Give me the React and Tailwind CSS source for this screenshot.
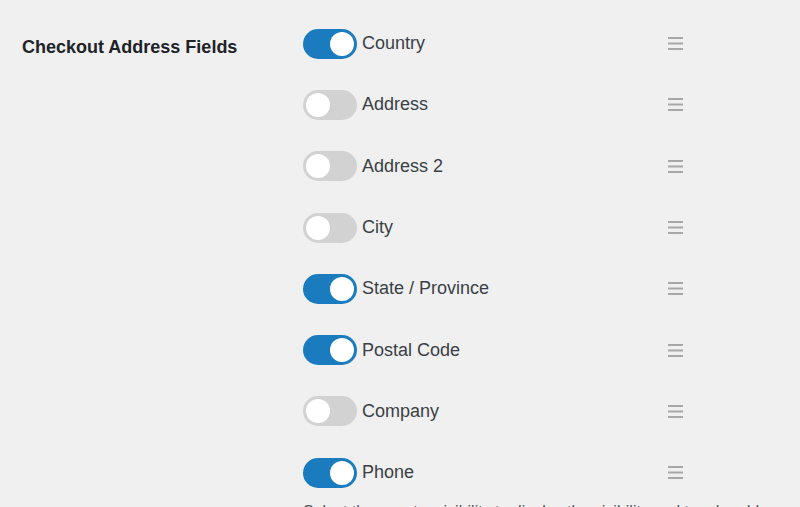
import React, { useState } from "react";

const initialFields = [
  { id: "country", label: "Country", on: true },
  { id: "address", label: "Address", on: false },
  { id: "address2", label: "Address 2", on: false },
  { id: "city", label: "City", on: false },
  { id: "state", label: "State / Province", on: true },
  { id: "postal", label: "Postal Code", on: true },
  { id: "company", label: "Company", on: false },
  { id: "phone", label: "Phone", on: true },
];

const Toggle = ({ on, onClick }) => (
  <button
    onClick={onClick}
    className={`relative flex h-[30px] w-[54px] shrink-0 items-center rounded-full px-[3px] ${
      on ? "bg-[#1a7cbf] justify-end" : "bg-[#d2d2d3] justify-start"
    }`}
  >
    <span className="block h-[24px] w-[24px] rounded-full bg-white" />
  </button>
);

const DragHandle = () => (
  <svg width="15" height="13" viewBox="0 0 15 13" className="shrink-0">
    <rect x="0" y="0" width="15" height="2" fill="#a7a7a7" />
    <rect x="0" y="5.5" width="15" height="2" fill="#a7a7a7" />
    <rect x="0" y="11" width="15" height="2" fill="#a7a7a7" />
  </svg>
);

const App = () => {
  const [fields, setFields] = useState(initialFields);

  const toggle = (id) => {
    setFields(fields.map((f) => (f.id === id ? { ...f, on: !f.on } : f)));
  };

  return (
    <div
      className="flex h-[507px] w-full overflow-hidden bg-[#f0f0f0] text-[#3c434a]"
      style={{ fontFamily: '"Liberation Sans", Arial, sans-serif' }}
    >
      <div className="w-[303px] shrink-0 pl-[22px] pt-[34px]">
        <h2 className="text-[18px] font-bold text-[#1d2327]">Checkout Address Fields</h2>
      </div>

      <div className="flex flex-col pt-[13px]">
        {fields.map((f) => (
          <div key={f.id} className="flex h-[61.3px] w-[380px] shrink-0 items-center">
            <Toggle on={f.on} onClick={() => toggle(f.id)} />
            <span className="ml-[5px] text-[18px] text-[#3a3f45]">{f.label}</span>
            <div className="ml-auto">
              <DragHandle />
            </div>
          </div>
        ))}
        <p className="mt-[-3px] w-[497px] shrink-0 text-[16px] text-[#50575e]">
          Select the country visibility to display the visibility and toggle address fields
        </p>
      </div>
    </div>
  );
};

export default App;
